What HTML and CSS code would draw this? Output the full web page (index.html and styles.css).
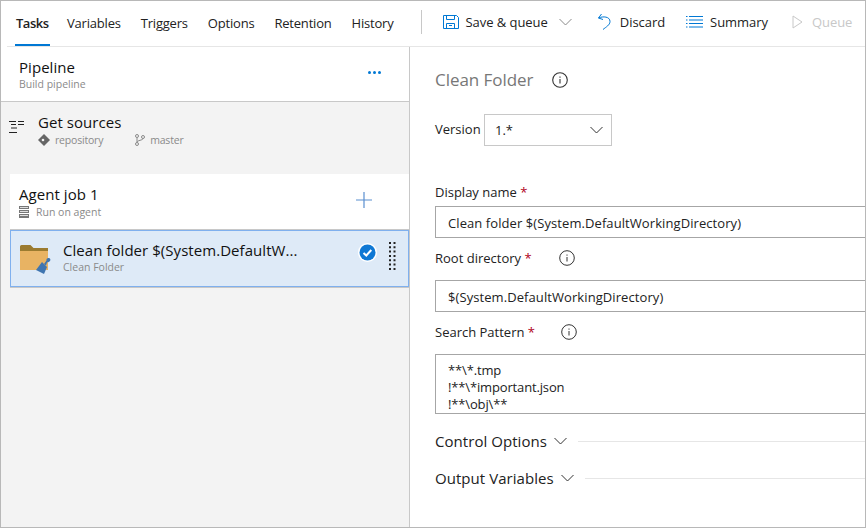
FILE: index.html
```html
<!doctype html>
<html lang="en">
<head>
    <meta charset="UTF-8">
    <meta name="viewport" content="width=device-width, initial-scale=1.0">
    <title>Clean Folder</title>
    <link rel="stylesheet" href="styles.css">
</head>
<body>
    <div class="frame">
        <div class="topbar">
            <nav class="tabs">
                <a class="tab active">Tasks</a>
                <a class="tab">Variables</a>
                <a class="tab">Triggers</a>
                <a class="tab">Options</a>
                <a class="tab">Retention</a>
                <a class="tab">History</a>
            </nav>
            <div class="actions">
                <a class="action save">
                    <svg width="18" height="16" viewBox="0 0 18 16" fill="none" stroke="#0078d4"><path d="M.5 1.500h13l2 2v11H.5z"/><path d="M3.500 1.500v4h8v-4M3.500 14.500v-5h8v5M6 11.500h3"/></svg>
                    <span>Save &amp; queue</span>
                    <svg class="caret-light" width="13" height="8" viewBox="0 0 13 8" fill="none" stroke="#8a8a8a"><path d="M.5 1l6 6 6-6"/></svg>
                </a>
                <a class="action discard">
                    <svg width="16" height="18" viewBox="0 0 16 18" fill="none" stroke="#0078d4"><path d="M4.500 1L1.500 5 6 6.500"/><path d="M1.500 5C6 3 13 3.500 13 8.500 13 12 9 14 6 16.500"/></svg>
                    <span>Discard</span>
                </a>
                <a class="action summary">
                    <svg width="17" height="12" viewBox="0 0 17 12" fill="none" stroke="#0078d4"><path d="M3 .5h14M3 4h14M3 7.500h14M3 11h14"/><path d="M0 .5h1.500M0 4h1.500M0 7.500h1.500M0 11h1.500"/></svg>
                    <span>Summary</span>
                </a>
                <a class="action queue">
                    <svg width="11" height="14" viewBox="0 0 11 14" fill="none" stroke="#c8c8c8"><path d="M1 1l9 6-9 6z"/></svg>
                    <span>Queue</span>
                </a>
            </div>
        </div>

        <div class="main">
            <aside class="left">
                <div class="pipeline">
                    <div>
                        <div class="title">Pipeline</div>
                        <div class="sub">Build pipeline</div>
                    </div>
                    <span class="dots"><i></i><i></i><i></i></span>
                </div>

                <div class="sources">
                    <svg class="sources-icon" width="15" height="14" viewBox="0 0 15 14" fill="none" stroke="#222"><path d="M0 1.500h7M9 1.500h6M2 4.500h5M9 4.500h6M2 8h6M0 12.500h8"/></svg>
                    <div>
                        <div class="title">Get sources</div>
                        <div class="meta">
                            <svg width="12" height="12" viewBox="0 0 12 12"><path fill="#666" d="M6 0l6 6-6 6-6-6z"/><circle cx="5" cy="6" r="1.300" fill="#f3f3f3"/></svg>
                            <span class="repo">repository</span>
                            <svg width="10" height="12" viewBox="0 0 10 12" fill="none" stroke="#8a8a8a"><circle cx="2" cy="2" r="1.500"/><circle cx="2" cy="10" r="1.500"/><circle cx="8" cy="3" r="1.500"/><path d="M2 3.500v5M8 4.500c0 2-6 1.500-6 4"/></svg>
                            <span>master</span>
                        </div>
                    </div>
                </div>

                <div class="job">
                    <div>
                        <div class="title">Agent job 1</div>
                        <div class="meta">
                            <svg width="10" height="12" viewBox="0 0 10 12"><path fill="#777" d="M0 0h10v3H0zM0 4h10v3H0zM0 8h10v4H0z"/><path stroke="#ddd" d="M1 1.500h8M1 5.500h8M1 9.500h8"/></svg>
                            <span>Run on agent</span>
                        </div>
                    </div>
                    <svg class="plus" width="16" height="16" viewBox="0 0 16 16" stroke="#5a8fd0" stroke-width="1.200"><path d="M8 0v16M0 8h16"/></svg>
                </div>

                <div class="task">
                    <svg class="folder" width="31" height="32" viewBox="0 0 31 32">
                        <path fill="#e8b363" d="M0 5h28v21H0z"/>
                        <path fill="#9b7b30" d="M0 2.500A1.500 1.500 0 0 1 1.500 1h9l3 3h14.500v3H0z"/>
                        <path fill="#3f75b0" d="M16 26l6-8 5 5-3 7z"/>
                        <path fill="#3f75b0" d="M24 20l2.500-3.500c-.5-1.500 1-3 2.500-2.500s2 2.500.5 3.500-1.500 .5-2.500 1l-1 3z"/>
                    </svg>
                    <div class="task-text">
                        <div class="title">Clean folder $(System.DefaultW...</div>
                        <div class="sub">Clean Folder</div>
                    </div>
                    <svg class="check" width="19" height="19" viewBox="0 0 19 19">
                        <circle cx="9.500" cy="9.500" r="9.500" fill="#fff"/>
                        <circle cx="9.500" cy="9.500" r="8" fill="#0f78d4"/>
                        <path d="M5.500 10l2.800 2.500 5-5.500" fill="none" stroke="#fff" stroke-width="2"/>
                    </svg>
                    <svg class="grip" width="7" height="28" viewBox="0 0 7 28" fill="#222">
                        <path d="M0 0h2v2H0zM4.500 0h2v2h-2zM0 4.300h2v2H0zM4.500 4.300h2v2h-2zM0 8.600h2v2H0zM4.500 8.600h2v2h-2zM0 13h2v2H0zM4.500 13h2v2h-2zM0 17.300h2v2H0zM4.500 17.300h2v2h-2zM0 21.600h2v2H0zM4.500 21.600h2v2h-2zM0 26h2v2H0zM4.500 26h2v2h-2z"/>
                    </svg>
                </div>
            </aside>

            <section class="right">
                <h1 class="heading">Clean Folder <svg class="info big" width="16" height="16" viewBox="0 0 16 16"><circle cx="8" cy="8" r="7.300" fill="none" stroke="#333" stroke-width="1.100"/><path d="M8 4.500v1.200M8 7v4.500" stroke="#333" stroke-width="1.100"/></svg></h1>

                <div class="version">
                    <label>Version</label>
                    <div class="select">
                        <span>1.*</span>
                        <svg width="13" height="8" viewBox="0 0 13 8" fill="none" stroke="#333"><path d="M.5 1l6 6 6-6"/></svg>
                    </div>
                </div>

                <label class="field-label first">Display name <b>*</b></label>
                <div class="input">Clean folder $(System.DefaultWorkingDirectory)</div>

                <label class="field-label">Root directory <b>*</b>
                    <svg class="info root-info" width="16" height="16" viewBox="0 0 16 16"><circle cx="8" cy="8" r="7.300" fill="none" stroke="#333"/><path d="M8 4.500v1.200M8 7v4.500" stroke="#333"/></svg>
                </label>
                <div class="input">$(System.DefaultWorkingDirectory)</div>

                <label class="field-label">Search Pattern <b>*</b>
                    <svg class="info" width="16" height="16" viewBox="0 0 16 16"><circle cx="8" cy="8" r="7.300" fill="none" stroke="#333"/><path d="M8 4.500v1.200M8 7v4.500" stroke="#333"/></svg>
                </label>
                <div class="textarea">**\*.tmp<br>!**\*important.json<br>!**\obj\**</div>

                <div class="section">
                    <span>Control Options</span>
                    <svg width="13" height="8" viewBox="0 0 13 8" fill="none" stroke="#333"><path d="M.5 1l6 6 6-6"/></svg>
                    <i></i>
                </div>
                <div class="section">
                    <span>Output Variables</span>
                    <svg width="13" height="8" viewBox="0 0 13 8" fill="none" stroke="#333"><path d="M.5 1l6 6 6-6"/></svg>
                    <i></i>
                </div>
            </section>
        </div>
    </div>
</body>
</html>
```

FILE: styles.css
```css
html, body {
    margin: 0;
    height: 100%;
}
body {
    font-family: "Open Sans", "Noto Sans", Arial, sans-serif;
    font-size: 13px;
    color: #222;
    background: #fff;
}
.frame {
    box-sizing: border-box;
    width: 866px;
    height: 528px;
    border: 1px solid #b8b8b8;
    display: flex;
    flex-direction: column;
    overflow: hidden;
}

/* top bar */
.topbar {
    display: flex;
    height: 45px;
    flex: none;
    margin-left: 6px;
    border-bottom: 1px solid #e6e6e6;
    white-space: nowrap;
}
.tabs {
    display: flex;
    padding-left: 8px;
    gap: 18px;
}
.tab {
    padding: 13px 1px 0;
    height: 30px;
    letter-spacing: -.2px;
}
.tab.active {
    font-weight: 600;
    width: 33px;
    margin-right: -2px;
    letter-spacing: -.5px;
    border-bottom: 2px solid #0078d4;
}
.actions {
    display: flex;
    align-items: center;
    margin-left: 26px;
    height: 24px;
    margin-top: 9px;
    padding-left: 21px;
    border-left: 1px solid #c8c8c8;
}
.action {
    display: flex;
    align-items: center;
    letter-spacing: -.05px;
}
.action svg {
    flex: none;
}
.save span {
    margin-left: 5px;
}
.caret-light {
    margin-left: 11px;
}
.discard {
    margin-left: 25px;
}
.discard span {
    margin-left: 7px;
}
.summary {
    margin-left: 21px;
}
.summary span {
    margin-left: 7px;
}
.queue {
    margin-left: 24px;
    color: #c8c8c8;
}
.queue span {
    margin-left: 9px;
}

.main {
    flex: 1;
    display: flex;
    min-height: 0;
}

/* left column */
.left {
    width: 408px;
    flex: none;
    background: #f3f3f3;
    border-right: 1px solid #c8c8c8;
}
.title {
    font-size: 15px;
    line-height: 19px;
    color: #111;
    letter-spacing: .05px;
}
.sub, .meta {
    font-size: 10.500px;
    line-height: 14px;
    color: #8a8a8a;
}
.pipeline {
    height: 55px;
    box-sizing: border-box;
    background: #fff;
    border-bottom: 1px solid #c8c8c8;
    padding: 11px 28px 0 18px;
    display: flex;
    justify-content: space-between;
}
.dots {
    display: flex;
    gap: 2px;
    margin-top: 13px;
}
.dots i {
    width: 3px;
    height: 3px;
    border-radius: 50%;
    background: #0078d4;
}
.sources {
    display: flex;
    height: 72px;
    box-sizing: border-box;
    padding: 11px 0 0 8px;
}
.sources-icon {
    margin: 7px 14px 0 0;
}
.sources .meta {
    letter-spacing: -.2px;
}
.meta {
    display: flex;
    align-items: center;
    margin-top: 1px;
}
.meta span {
    margin-left: 5px;
}
.meta .repo {
    margin-right: 32px;
}
.job {
    margin-left: 9px;
    height: 56px;
    box-sizing: border-box;
    background: #fff;
    border-bottom: 1px solid #c8c8c8;
    padding: 11px 37px 0 9px;
    display: flex;
    justify-content: space-between;
}
.job .meta span {
    margin-left: 7px;
}
.plus {
    margin-top: 7px;
}
.task {
    margin-left: 9px;
    height: 57px;
    box-sizing: border-box;
    background: #deeaf7;
    border: 1px solid #7fb0ee;
    box-shadow: 0 1px 0 #c8c8c8;
    display: flex;
    align-items: center;
    padding-left: 9px;
}
.folder {
    flex: none;
    margin-top: 2px;
}
.task-text {
    margin: -3px 0 0 12px;
    width: 295px;
    white-space: nowrap;
}
.check {
    flex: none;
    margin-top: -12px;
}
.grip {
    flex: none;
    margin: -5px 0 0 12px;
}

/* right column */
.right {
    flex: 1;
    padding-left: 25px;
    min-width: 0;
}
.heading {
    margin: 21px 0 0;
    height: 24px;
    font-size: 17px;
    line-height: 24px;
    font-weight: 400;
    color: #777;
    display: flex;
    align-items: center;
    letter-spacing: -.05px;
}
.info {
    margin-left: 26px;
}
.info.root-info {
    margin-left: 27px;
}
.info.big {
    margin-left: 19px;
}
.version {
    display: flex;
    align-items: center;
    margin-top: 22px;
}
.version label {
    width: 49px;
    margin-top: -2px;
}
.select {
    box-sizing: border-box;
    width: 128px;
    height: 32px;
    border: 1px solid #c8c8c8;
    display: flex;
    align-items: center;
    justify-content: space-between;
    padding: 0 8px 0 10px;
}
.field-label {
    display: flex;
    align-items: center;
    height: 18px;
    margin-top: 11px;
    margin-bottom: 13px;
    white-space: pre;
}
.field-label.first {
    margin-top: 37px;
    margin-bottom: 5px;
}
.field-label b {
    color: #b00020;
    font-weight: 400;
}
.input, .textarea {
    box-sizing: border-box;
    border: 1px solid #a6a6a6;
    border-right: 0;
    padding-left: 12px;
}
.input {
    height: 32px;
    line-height: 33px;
    letter-spacing: .08px;
}
.textarea {
    height: 60px;
    line-height: 17px;
    padding-top: 7px;
    overflow: hidden;
    letter-spacing: -.15px;
}
.section {
    display: flex;
    align-items: center;
    height: 20px;
    margin-top: 17px;
    font-size: 15px;
    letter-spacing: .05px;
}
.section svg {
    margin-left: 7px;
    flex: none;
}
.section i {
    flex: 1;
    height: 1px;
    background: #e6e6e6;
    margin-left: 11px;
}
```
